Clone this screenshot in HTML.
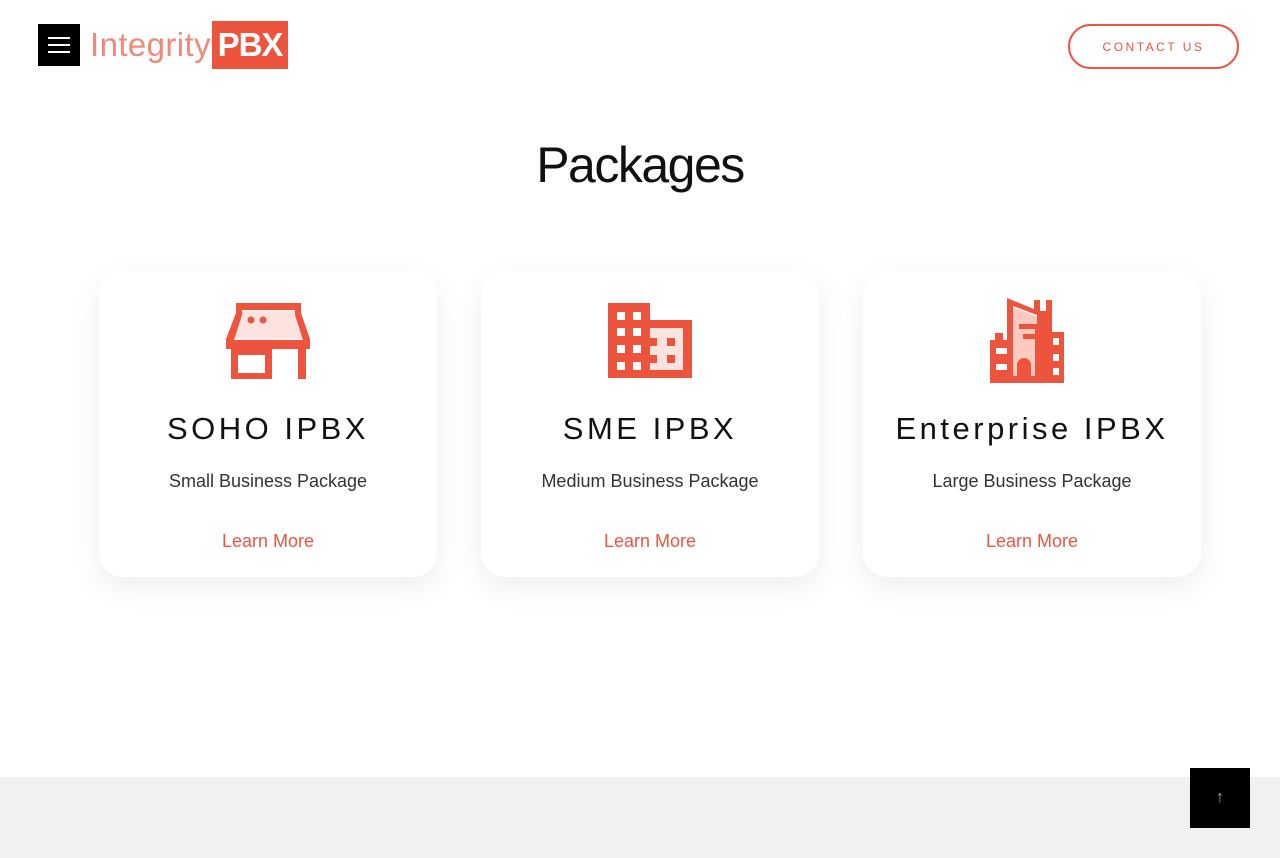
<!DOCTYPE html>
<html><head><meta charset="utf-8"><style>
*{margin:0;padding:0;box-sizing:border-box}
body{width:1280px;height:858px;background:#fff;font-family:"Liberation Sans",sans-serif;position:relative;overflow:hidden}
.menu{position:absolute;left:38px;top:24px;width:42px;height:42px;background:#000}
.menu i{position:absolute;left:10px;width:22px;height:2px;background:#fff}
.logo{position:absolute;left:90px;top:21px;height:48px;display:flex;align-items:center}
.logo .t{color:#ef8a79;font-size:33px;letter-spacing:0.4px;width:122px}
.logo .p{background:#ec543e;color:#fff;font-weight:bold;font-size:33px;height:48px;width:76px;display:flex;align-items:center;justify-content:center;letter-spacing:-1px}
.contact{position:absolute;left:1068px;top:24px;width:171px;height:45px;border:2px solid #ec543e;border-radius:23px;color:#ec543e;font-size:12px;letter-spacing:2.5px;display:flex;align-items:center;justify-content:center}
h1{position:absolute;top:136px;width:100%;text-align:center;font-size:50px;font-weight:500;color:#111;letter-spacing:-1.5px}
.card{position:absolute;top:271px;width:338px;height:306px;background:#fff;border-radius:24px;box-shadow:0 10px 30px rgba(0,0,0,0.07);text-align:center}
.card svg{position:absolute;left:127px;top:32px}
.card h2{position:absolute;left:0;top:140px;width:100%;font-size:31px;font-weight:normal;letter-spacing:3.5px;color:#111}
.card p{position:absolute;left:0;top:200px;width:100%;font-size:18px;color:#333}
.card a{position:absolute;left:0;top:260px;width:100%;font-size:18px;color:#ec543e;text-decoration:none;display:block}
.foot{position:absolute;left:0;top:777px;width:1280px;height:81px;background:#f1f1f1}
.top{position:absolute;left:1190px;top:768px;width:60px;height:60px;background:#000;color:#aaa;font-size:16px;display:flex;align-items:center;justify-content:center}
</style></head><body>
<div class="menu"><i style="top:13px"></i><i style="top:20px"></i><i style="top:27px"></i></div>
<div class="logo"><span class="t">Integrity</span><span class="p">PBX</span></div>
<div class="contact">CONTACT US</div>
<h1>Packages</h1>

<div class="card" style="left:99px">
<svg width="86" height="80" viewBox="0 0 86 80">
<path d="M16 8H69V12L77 36H8L16 12Z" fill="#fde3df"/>
<path d="M10 0H75V10L84 36V46H80V76H72V46H46V76H5V46H0V36L10 10Z M16 7V12L8 37H77L69 12V7Z M12 52V70H39V52Z" fill="#ec543e" fill-rule="evenodd"/>
<circle cx="25" cy="17" r="3.5" fill="#ec543e"/><circle cx="37" cy="17" r="3.5" fill="#ec543e"/>
</svg>
<h2>SOHO IPBX</h2><p>Small Business Package</p><a>Learn More</a></div>

<div class="card" style="left:481px">
<svg width="86" height="80" viewBox="0 0 86 80">
<path d="M0 0H42V17H84V75H0Z" fill="#ec543e"/>
<rect x="42" y="25" width="33" height="42" fill="#fde3df"/>
<g fill="#fff"><rect x="9" y="9" width="8" height="8"/><rect x="25" y="9" width="8" height="8"/><rect x="9" y="25" width="8" height="8"/><rect x="25" y="25" width="8" height="8"/><rect x="9" y="42" width="8" height="8"/><rect x="25" y="42" width="8" height="8"/><rect x="9" y="59" width="8" height="8"/><rect x="25" y="59" width="8" height="8"/></g>
<g fill="#ec543e"><rect x="42" y="35" width="7" height="8"/><rect x="42" y="52" width="7" height="8"/><rect x="59" y="35" width="8" height="8"/><rect x="59" y="52" width="8" height="8"/></g>
</svg>
<h2>SME IPBX</h2><p>Medium Business Package</p><a>Learn More</a></div>

<div class="card" style="left:863px">
<svg width="86" height="86" viewBox="0 0 86 86" style="top:27px">
<path d="M20 8l30 12v64H20z" fill="#fbc9c0"/>
<path d="M17 0l27 11V2h6v11h6V2h6v32h12v51H0V42h5v-7h8v7h4z M23 8v70h4v-11a7 7 0 0 1 14 0v11h4V28l2-1V17z M6 50v6h11v-6z M6 66v6h11v-6z M63 40v7h6v-7z M63 56v7h6v-7z M63 70v7h6v-7z" fill="#ec543e" fill-rule="evenodd"/>
<rect x="29" y="26" width="18" height="5" fill="#ec543e"/><rect x="33" y="36" width="14" height="5" fill="#ec543e"/>
</svg>
<h2>Enterprise IPBX</h2><p>Large Business Package</p><a>Learn More</a></div>

<div class="foot"></div>
<div class="top">↑</div>
</body></html>
